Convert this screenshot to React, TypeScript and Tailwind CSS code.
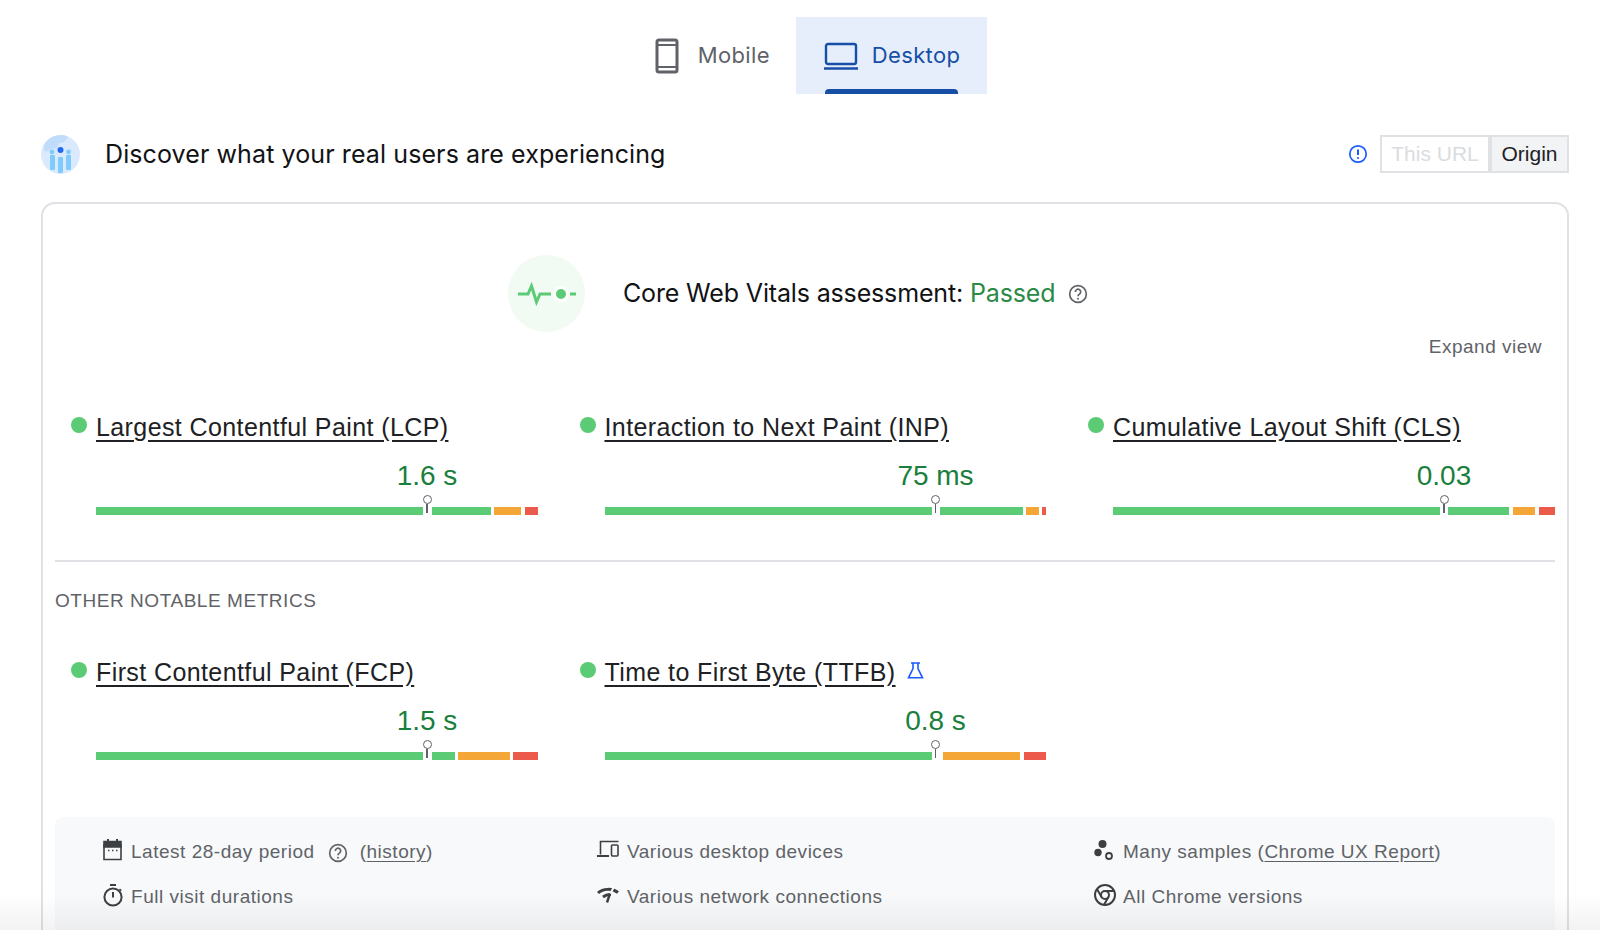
import type { ReactNode } from 'react';

// Field data segments: widths and gaps come straight from the report bars
interface Metric {
  name: string;
  value: string;
  segments: string[];
  flask?: boolean;
}

const topMetrics: Metric[] = [
  {
    name: 'Largest Contentful Paint (LCP)',
    value: '1.6 s',
    segments: ['w-[327px] bg-[#5ccb75]', 'w-[59px] ml-[9px] bg-[#5ccb75]', 'w-[27px] ml-[3px] bg-[#f4a637]', 'w-[13px] ml-[4px] bg-[#ec5a4b]'],
  },
  {
    name: 'Interaction to Next Paint (INP)',
    value: '75 ms',
    segments: ['w-[327px] bg-[#5ccb75]', 'w-[83px] ml-[8px] bg-[#5ccb75]', 'w-[13px] ml-[3px] bg-[#f4a637]', 'w-[4px] ml-[3px] bg-[#ec5a4b]'],
  },
  {
    name: 'Cumulative Layout Shift (CLS)',
    value: '0.03',
    segments: ['w-[327px] bg-[#5ccb75]', 'w-[61px] ml-[8px] bg-[#5ccb75]', 'w-[22px] ml-[4px] bg-[#f4a637]', 'w-[16px] ml-[4px] bg-[#ec5a4b]'],
  },
];

const otherMetrics: Metric[] = [
  {
    name: 'First Contentful Paint (FCP)',
    value: '1.5 s',
    segments: ['w-[327px] bg-[#5ccb75]', 'w-[23px] ml-[9px] bg-[#5ccb75]', 'w-[52px] ml-[3px] bg-[#f4a637]', 'w-[25px] ml-[3px] bg-[#ec5a4b]'],
  },
  {
    name: 'Time to First Byte (TTFB)',
    value: '0.8 s',
    flask: true,
    segments: ['w-[327px] bg-[#5ccb75]', 'w-[77px] ml-[11px] bg-[#f4a637]', 'w-[22px] ml-[4px] bg-[#ec5a4b]'],
  },
];

function HelpIcon({ className }: { className: string }) {
  return (
    <svg className={className} viewBox="0 0 24 24" fill="none" stroke="currentColor" strokeWidth={2}>
      <circle cx="12" cy="12" r="10" />
      <path d="M8.8 9.5a3.2 3.2 0 1 1 4.9 2.7c-1.1.7-1.7 1.3-1.7 2.6" />
      <circle cx="12" cy="17.6" r="1.2" fill="currentColor" stroke="none" />
    </svg>
  );
}

function MetricCell({ metric }: { metric: Metric }) {
  return (
    <div>
      <div className="flex items-start">
        <span className="w-4 h-4 rounded-full bg-[#5ccb75] mr-[9px] mt-[7px]" />
        <a className="mt-[1px] text-[25px] leading-[32px] text-[#202124] underline underline-offset-[4px] tracking-[0.4px]">{metric.name}</a>
        {metric.flask && (
          <svg className="w-[17px] h-[17px] ml-[11px] mt-[7px] text-[#1a5cff]" viewBox="0 0 17 17" fill="none" stroke="currentColor" strokeWidth={1.6}>
            <path d="M4 1h9M6 1v5.500L1.500 15.800h14L11 6.500V1" />
          </svg>
        )}
      </div>
      <div className="ml-[25px] mt-[17px]">
        <div className="ml-[231px] w-[200px] text-center text-[28px] leading-[32px] text-[#1a7f3c]">{metric.value}</div>
        <div className="relative flex h-2 mt-[15px]">
          {metric.segments.map((s) => (
            <div key={s} className={`h-full ${s}`} />
          ))}
          <div className="absolute left-[326px] -top-[12px] flex flex-col items-center w-[10px]">
            <span className="w-[9px] h-[9px] rounded-full border border-[#5f6368] bg-white" />
            <span className="w-[1.5px] h-[9px] bg-[#5f6368]" />
          </div>
        </div>
      </div>
    </div>
  );
}

function FootItem({ icon, children }: { icon: ReactNode; children: ReactNode }) {
  return (
    <div className="flex items-center h-[45px] text-[19px] text-[#5f6368] tracking-[0.52px]">
      <span className="w-[28px] flex-none flex items-center text-[#3c4043] -mt-[5px]">{icon}</span>
      {children}
    </div>
  );
}

export default function App() {
  return (
    <div className="relative h-[930px] w-full overflow-hidden bg-white font-['Liberation_Sans',sans-serif]">
      <div className="px-[31px] pl-[41px]">
        {/* Mobile / Desktop switch */}
        <div className="flex justify-center pt-[17px] pl-[5px] font-['Inter',sans-serif] text-[22px] tracking-[0.35px]">
          <div className="flex items-center h-[77px] pl-[27px] pr-[26px] text-[#5f6368]">
            <svg className="w-[24px] h-[36px] mr-[19px]" viewBox="0 0 24 36" fill="none" stroke="currentColor" strokeWidth={3}>
              <rect x="2" y="2" width="20" height="32" rx="2" />
              <path d="M2 7h20M2 29h20" strokeWidth={2} />
            </svg>
            Mobile
          </div>
          <div className="relative flex items-center h-[77px] px-[27px] bg-[#e6eefb] text-[#174ea6]">
            <svg className="w-[36px] h-[28px] mr-[13px]" viewBox="0 0 36 28" fill="none" stroke="currentColor" strokeWidth={2.4}>
              <rect x="3" y="2" width="30" height="20" rx="2" />
              <path d="M1 26.500h34" strokeWidth={2.4} />
            </svg>
            Desktop
            <span className="absolute left-[29px] right-[29px] bottom-0 h-[5px] rounded-t-[4px] bg-[#174ea6]" />
          </div>
        </div>

        {/* Field data header */}
        <div className="flex items-center mt-[41px] h-[38px]">
          <svg className="w-[39px] h-[39px] flex-none" viewBox="0 0 39 39">
            <circle cx="19.500" cy="19.500" r="19.500" fill="#dbe9fd" />
            <path d="M3 10C6 4 13 0 21 0c3 0 5 1 6 2l-4 5-5 1-2 5-6 1-5 3-2-2z" fill="#bfdcfb" />
            <rect x="9" y="20" width="5" height="15" rx="1" fill="#7fcbfb" />
            <rect x="17" y="22" width="5" height="16" rx="1" fill="#7fcbfb" />
            <rect x="25" y="20" width="5" height="15" rx="1" fill="#7fcbfb" />
            <circle cx="11" cy="17" r="2.400" fill="#7fcbfb" />
            <circle cx="27.500" cy="17" r="2.400" fill="#7fcbfb" />
            <circle cx="19.500" cy="15" r="3" fill="#2468f2" />
          </svg>
          <h2 className="ml-[25px] mt-[2px] font-['Inter',sans-serif] text-[25px] tracking-[0.1px] text-[#111214]">Discover what your real users are experiencing</h2>
          <svg className="w-[20px] h-[20px] ml-auto text-[#1a5cff]" viewBox="0 0 20 20" fill="none" stroke="currentColor" strokeWidth={1.7}>
            <circle cx="10" cy="10" r="8.200" />
            <path d="M10 5.500v5.500" strokeWidth={2} />
            <circle cx="10" cy="14" r="1.100" fill="currentColor" stroke="none" />
          </svg>
          <div className="flex ml-[12px] h-[38px] text-[21px]">
            <span className="flex items-center w-[110px] justify-center border-2 border-[#dfe1e5] text-[#dadce0]">This URL</span>
            <span className="flex items-center w-[79px] justify-center border-2 border-[#dfe1e5] bg-[#f1f3f4] text-[#202124]">Origin</span>
          </div>
        </div>

        {/* Assessment card, runs off the bottom of the window */}
        <div className="mt-[29px] h-[800px] rounded-[14px] border-2 border-[#dfe1e5] px-[12px]">
          <div className="flex items-center pt-[51px] pl-[453px]">
            <div className="relative flex items-center justify-center w-[77px] h-[77px] rounded-full bg-[#f1faf3] flex-none">
              <svg className="w-[60px] h-[24px]" viewBox="0 0 60 24" fill="none" stroke="#5ccb75" strokeWidth={3}>
                <path d="M1 12h10l3.500-8 5 16 3.500-8h11" />
                <circle cx="44" cy="12" r="6.500" fill="#5ccb75" stroke="#ffffff" strokeWidth={3} />
                <path d="M53 12h6" />
              </svg>
            </div>
            <div className="ml-[38px] font-['Inter',sans-serif] text-[25px] tracking-[-0.15px] text-[#111214]">
              Core Web Vitals assessment: <span className="text-[#2b8a46]">Passed</span>
            </div>
            <HelpIcon className="w-[20px] h-[20px] ml-[13px] text-[#5f6368]" />
          </div>
          <div className="text-right pr-[13px] mt-[3px] text-[19px] leading-[24px] tracking-[0.5px] text-[#5f6368]">Expand view</div>

          <div className="grid grid-cols-[repeat(3,508.500px)] pl-[16px] mt-[51px]">
            {topMetrics.map((m) => (
              <MetricCell key={m.name} metric={m} />
            ))}
          </div>

          <div className="h-[2px] bg-[#dfe1e5] mt-[45px]" />
          <div className="mt-[27px] text-[19px] leading-[24px] tracking-[0.55px] text-[#5f6368]">OTHER NOTABLE METRICS</div>

          <div className="grid grid-cols-[repeat(3,508.500px)] pl-[16px] mt-[42px]">
            {otherMetrics.map((m) => (
              <MetricCell key={m.name} metric={m} />
            ))}
          </div>

          {/* Collection period notes */}
          <div className="grid grid-cols-[repeat(3,496px)] mt-[57px] h-[200px] rounded-[8px] bg-[#f8f9fa] pl-[48px] pt-[13px]">
            <div>
              <FootItem
                icon={
                  <svg className="w-[19px] h-[22px]" viewBox="0 0 19 22" fill="none" stroke="currentColor" strokeWidth={1.6}>
                    <path d="M1 6h17v14.500H1z" />
                    <path d="M1 2.500h17V8H1z" fill="currentColor" />
                    <path d="M5 0v3M14 0v3" strokeWidth={2} />
                    <path d="M5 11.500h1.500M9 11.500h1.500M13 11.500h1.500" strokeWidth={1.5} />
                  </svg>
                }
              >
                Latest 28-day period
                <HelpIcon className="w-[20px] h-[20px] ml-[13px] mr-[12px] text-[#5f6368]" />
                <span>
                  (<a className="underline underline-offset-[3px]">history</a>)
                </span>
              </FootItem>
              <FootItem
                icon={
                  <svg className="w-[20px] h-[23px]" viewBox="0 0 20 23" fill="none" stroke="currentColor" strokeWidth={2}>
                    <circle cx="10" cy="13" r="8.600" />
                    <path d="M7 1h6M10 8v5.500" />
                    <path d="M16.500 5l1.800 1.800" strokeWidth={1.500} />
                  </svg>
                }
              >
                Full visit durations
              </FootItem>
            </div>
            <div>
              <FootItem
                icon={
                  <svg className="w-[22px] h-[18px] -ml-[2px] -mt-[2px]" viewBox="0 0 22 18" fill="none" stroke="currentColor" strokeWidth={1.600}>
                    <path d="M3.500 14.500V1.500h18" />
                    <path d="M0 16h12" strokeWidth={2} />
                    <rect x="14.500" y="5" width="6.500" height="11" rx="1" />
                  </svg>
                }
              >
                Various desktop devices
              </FootItem>
              <FootItem
                icon={
                  <svg className="w-[22px] h-[18px] -ml-[2px]" viewBox="0 0 22 18" fill="none" stroke="currentColor">
                    <path d="M1 7C6 2.500 15 2 21 6.500" strokeWidth={3} />
                    <path d="M6 11c2.500-2 5.500-2.800 8-2.500" strokeWidth={3} />
                    <path d="M17.500 0L13 8" stroke="#f8f9fa" strokeWidth={2} />
                    <path d="M13 7.500L10 16.500" strokeWidth={2.400} />
                  </svg>
                }
              >
                Various network connections
              </FootItem>
            </div>
            <div>
              <FootItem
                icon={
                  <svg className="w-[20px] h-[21px] -ml-[1px]" viewBox="0 0 20 21" fill="currentColor">
                    <circle cx="8.500" cy="4" r="4" />
                    <circle cx="4" cy="12.500" r="3.700" />
                    <circle cx="15" cy="16" r="3" fill="none" stroke="currentColor" strokeWidth={1.800} />
                  </svg>
                }
              >
                Many samples (<a className="underline underline-offset-[3px]">Chrome UX Report</a>)
              </FootItem>
              <FootItem
                icon={
                  <svg className="w-[24px] h-[24px] -ml-[2px]" viewBox="0 0 24 24" fill="none" stroke="currentColor" strokeWidth={2}>
                    <circle cx="12" cy="12" r="10" />
                    <circle cx="12" cy="12" r="4" />
                    <path d="M21.170 8H12M3.950 6.060L8.540 14M10.880 21.940L15.460 14" />
                  </svg>
                }
              >
                All Chrome versions
              </FootItem>
            </div>
          </div>
        </div>
      </div>
      {/* Fade over the bottom edge of the page */}
      <div className="absolute inset-x-0 bottom-0 h-[36px] bg-gradient-to-b from-transparent to-black/5 pointer-events-none" />
    </div>
  );
}
